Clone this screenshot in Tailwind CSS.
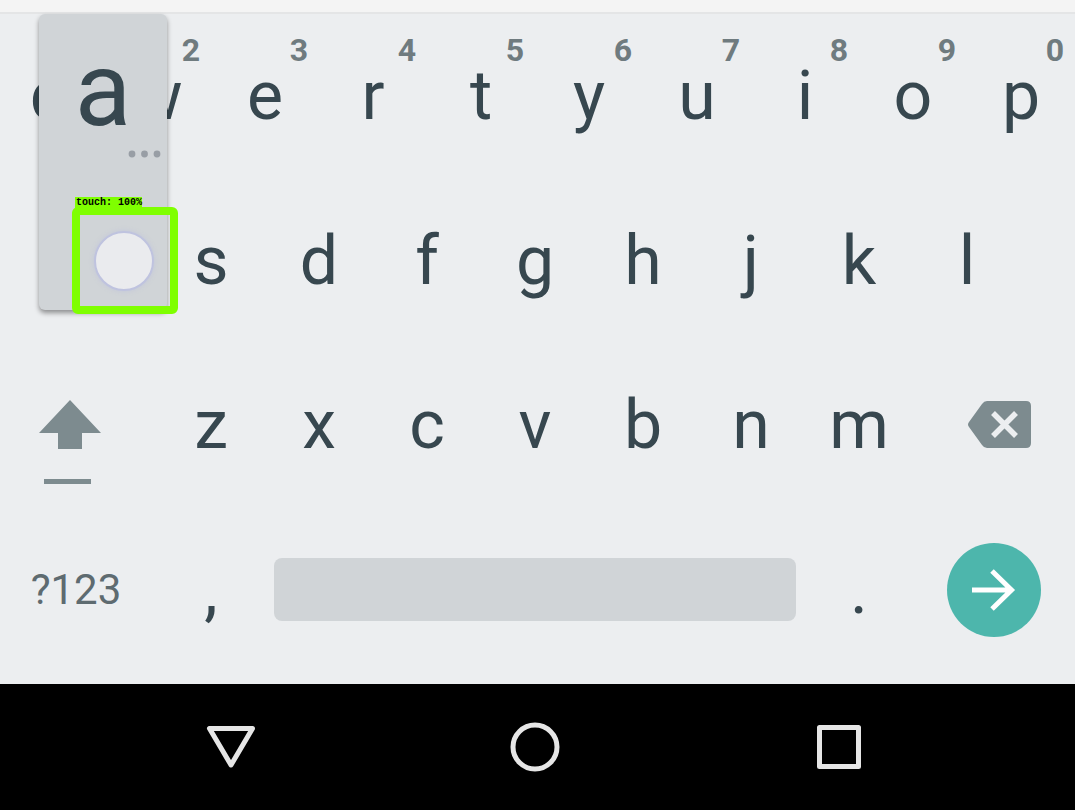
<!DOCTYPE html>
<html lang="en">
<head>
<meta charset="utf-8">
<meta name="viewport" content="width=device-width, initial-scale=1">
<title>Keyboard</title>
<script src="https://cdn.jsdelivr.net/npm/@tailwindcss/browser@4"></script>
</head>
<body class="min-h-screen flex flex-col overflow-x-hidden bg-[#eceef0] font-['Roboto',sans-serif] text-[#37474f]">
<div class="h-[14px] shrink-0 bg-[#f4f4f4] border-b-2 border-[#e4e5e6]"></div>
<main class="flex-1 grid grid-rows-4 -ml-[5px] pb-3 text-[68px] leading-none">
  <div class="grid grid-cols-10">
    <button class="relative">q</button>
    <button class="relative">w<span class="absolute top-5 right-[11px] text-[32px] leading-8 font-bold text-[#6f7b7f]">2</span></button>
    <button class="relative">e<span class="absolute top-5 right-[11px] text-[32px] leading-8 font-bold text-[#6f7b7f]">3</span></button>
    <button class="relative">r<span class="absolute top-5 right-[11px] text-[32px] leading-8 font-bold text-[#6f7b7f]">4</span></button>
    <button class="relative">t<span class="absolute top-5 right-[11px] text-[32px] leading-8 font-bold text-[#6f7b7f]">5</span></button>
    <button class="relative">y<span class="absolute top-5 right-[11px] text-[32px] leading-8 font-bold text-[#6f7b7f]">6</span></button>
    <button class="relative">u<span class="absolute top-5 right-[11px] text-[32px] leading-8 font-bold text-[#6f7b7f]">7</span></button>
    <button class="relative">i<span class="absolute top-5 right-[11px] text-[32px] leading-8 font-bold text-[#6f7b7f]">8</span></button>
    <button class="relative">o<span class="absolute top-5 right-[11px] text-[32px] leading-8 font-bold text-[#6f7b7f]">9</span></button>
    <button class="relative">p<span class="absolute top-5 right-[11px] text-[32px] leading-8 font-bold text-[#6f7b7f]">0</span></button>
  </div>
  <div class="grid grid-cols-9 px-[5%]">
    <div class="relative z-10">
      <button aria-label="a" class="absolute left-1/2 -translate-x-1/2 bottom-[33px] w-32 h-[296px] rounded-md bg-[#d0d4d7] shadow-[0_3px_5px_rgba(0,0,0,0.4)]">
        <span class="absolute inset-x-0 top-6 text-center text-[104px] leading-[104px]">a</span>
        <svg class="absolute right-[6px] top-[136px]" width="33" height="8" viewBox="0 0 33 8" fill="#989ea5"><circle cx="4" cy="4" r="3.4"/><circle cx="16.5" cy="4" r="3.4"/><circle cx="29" cy="4" r="3.4"/></svg>
      </button>
      <div class="absolute left-[23px] bottom-[29px] w-[106px] h-[107px] rounded-md border-8 border-[#7fff00] flex items-center pl-[14px]">
        <span class="size-[60px] rounded-full bg-[#eaebee] border-2 border-[#bfc3df] shadow-[0_0_5px_rgba(190,195,220,0.8)]"></span>
        <span class="absolute -left-[5px] -top-[18px] h-3 w-[67px] pl-px bg-[#7fff00] font-['Liberation_Mono',monospace] font-bold text-[10px] leading-3 whitespace-nowrap text-black">touch: 100%</span>
      </div>
    </div>
    <button>s</button><button>d</button><button>f</button><button>g</button><button>h</button><button>j</button><button>k</button><button>l</button>
  </div>
  <div class="grid grid-cols-[3fr_2fr_2fr_2fr_2fr_2fr_2fr_2fr_3fr]">
    <button aria-label="Shift" class="flex items-center pl-11">
      <svg class="mt-[34px]" width="62" height="85" viewBox="0 0 62 85" fill="#7d8b8f"><path d="M31 0L62 33H43V49H19V33H0Z"/><path d="M5 79H52V84H5Z"/></svg>
    </button>
    <button>z</button><button>x</button><button>c</button><button>v</button><button>b</button><button>n</button><button>m</button>
    <button aria-label="Backspace" class="flex items-center justify-end pr-11">
      <svg width="63" height="48" viewBox="0 0 63 48"><path d="M19 0H58Q63 0 63 5V42Q63 47 58 47H19Q16 47 14 44L1 26Q-1 23.500 1 21L14 3Q16 0 19 0Z" fill="#7d8b8f"/><path d="M25 12L48 35M48 12L25 35" stroke="#eceef0" stroke-width="5.500"/></svg>
    </button>
  </div>
  <div class="grid grid-cols-[3fr_2fr_10fr_2fr_3fr] items-center">
    <button class="text-[42px] leading-none text-[#5e6b70]">?123</button>
    <button>,</button>
    <button aria-label="Space" class="mx-[9px] h-[63px] rounded-lg bg-[#d0d4d7]"></button>
    <button>.</button>
    <button aria-label="Next" class="justify-self-center size-[94px] rounded-full bg-[#4db6ac] flex items-center justify-center">
      <svg width="44" height="44" viewBox="0 0 44 44" fill="none" stroke="#fff" stroke-width="5"><path d="M0 22H39M20 3L39.500 22L20 41"/></svg>
    </button>
  </div>
</main>
<nav class="h-[126px] shrink-0 bg-black grid grid-cols-3 pl-[79px] pr-[84px]">
  <button aria-label="Back" class="flex items-center justify-center"><svg width="50" height="50" viewBox="0 0 50 50" fill="none" stroke="#e6e6e6" stroke-width="5" stroke-linejoin="round"><path d="M3.500 6.500H46.500L25 43Z"/></svg></button>
  <button aria-label="Home" class="flex items-center justify-center"><svg width="50" height="50" viewBox="0 0 50 50" fill="none" stroke="#e6e6e6" stroke-width="5"><circle cx="25" cy="25" r="22"/></svg></button>
  <button aria-label="Recent apps" class="flex items-center justify-center"><svg width="50" height="50" viewBox="0 0 50 50" fill="none" stroke="#e6e6e6" stroke-width="5" stroke-linejoin="round"><path d="M5.500 5.500H44.500V44.500H5.500Z"/></svg></button>
</nav>
</body>
</html>
